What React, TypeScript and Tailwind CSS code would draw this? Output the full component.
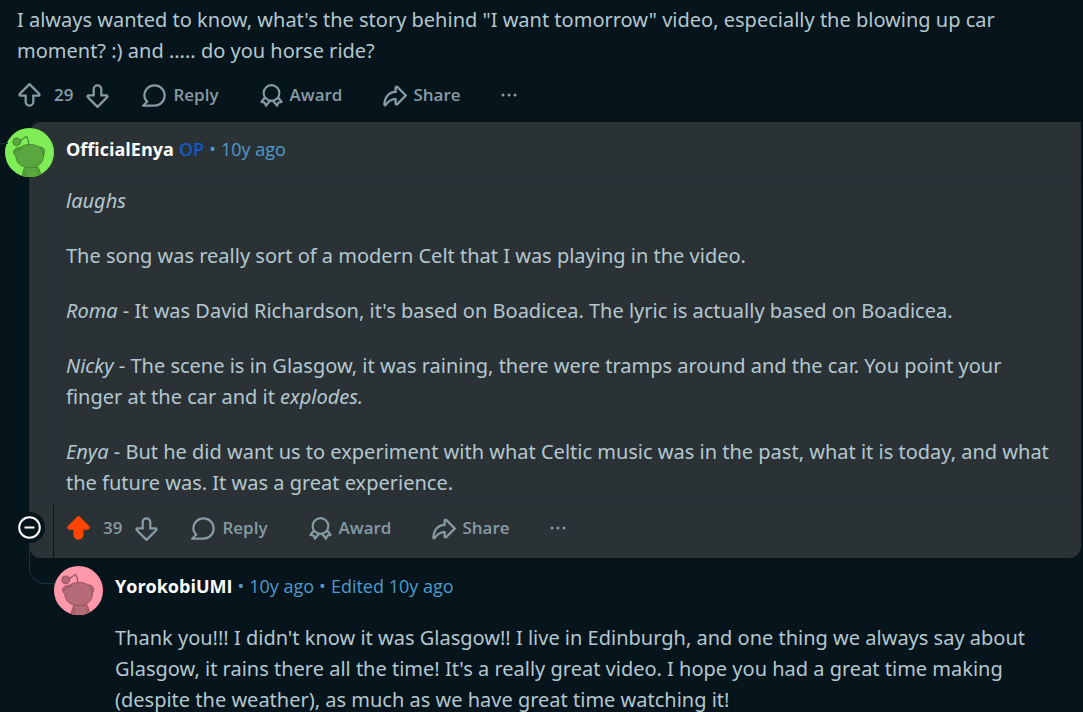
import type { ReactNode } from "react";

const ICON = "size-[25px] shrink-0";

const UP =
  "M10 19a3.966 3.966 0 01-3.96-3.962V10.98H2.838a1.731 1.731 0 01-1.605-1.073 1.734 1.734 0 01.377-1.895L9.364.254a.925.925 0 011.272 0l7.754 7.759c.498.499.646 1.242.376 1.894-.27.652-.9 1.073-1.605 1.073h-3.202v4.058A3.965 3.965 0 019.999 19H10z";
const UP_HOLE =
  "M2.989 9.179H7.84v5.731c0 1.13.81 2.163 1.934 2.278a2.163 2.163 0 002.386-2.15V9.179h4.851L10 2.163 2.989 9.179z";

function UpIcon({ filled }: { filled?: boolean }) {
  return (
    <svg viewBox="0 0 20 20" className={ICON} fill="currentColor" fillRule="evenodd" aria-hidden="true">
      <path d={filled ? UP : UP + UP_HOLE} />
    </svg>
  );
}

function DownIcon() {
  return (
    <svg viewBox="0 0 20 20" className={ICON} fill="currentColor" fillRule="evenodd" aria-hidden="true">
      <path d="M10 1a3.966 3.966 0 013.96 3.962V9.02h3.202c.706 0 1.335.42 1.605 1.073.27.652.122 1.396-.377 1.895l-7.754 7.759a.925.925 0 01-1.272 0l-7.754-7.76a1.734 1.734 0 01-.376-1.894c.27-.652.9-1.073 1.605-1.073h3.202V4.962A3.965 3.965 0 0110 1zm7.01 9.82h-4.85V5.09c0-1.13-.81-2.163-1.934-2.278a2.163 2.163 0 00-2.386 2.15v5.859H2.989l7.01 7.016 7.012-7.016z" />
    </svg>
  );
}

function ReplyIcon() {
  return (
    <svg viewBox="0 0 20 20" className={ICON} fill="currentColor" aria-hidden="true">
      <path d="M10 1a9 9 0 00-9 9c0 1.947.79 3.58 1.935 4.957L.231 17.661A.784.784 0 00.785 19H10a9 9 0 009-9 9 9 0 00-9-9zm0 16.2H6.162c-.994.004-1.907.053-3.045.144l-.076-.188a36.981 36.981 0 002.328-2.087l-1.05-1.263C3.297 12.576 2.8 11.331 2.8 10c0-3.97 3.23-7.2 7.2-7.2s7.2 3.23 7.2 7.2-3.23 7.2-7.2 7.2z" />
    </svg>
  );
}

function AwardIcon() {
  return (
    <svg viewBox="0 0 20 20" className={ICON} fill="none" stroke="currentColor" strokeWidth="1.7" strokeLinejoin="round" aria-hidden="true">
      <circle cx="10" cy="8" r="6.300" />
      <path d="M4.700 11.600L1.900 15.200l2.700.500.900 2.500 3.200-3.800M15.300 11.600l2.800 3.600-2.700.500-.900 2.500-3.200-3.800" />
    </svg>
  );
}

function ShareIcon() {
  return (
    <svg viewBox="0 0 20 20" className={ICON} fill="currentColor" aria-hidden="true">
      <path d="M12.8 17.524l6.89-6.887a.9.9 0 000-1.273L12.8 2.477a1.64 1.64 0 00-1.782-.349 1.64 1.64 0 00-1.014 1.518v2.593C4.054 6.728 1.192 12.075 1 17.376a1.353 1.353 0 00.862 1.32 1.35 1.35 0 001.531-.364l.334-.381c1.705-1.944 3.323-3.791 6.277-4.103v2.509c0 .667.398 1.262 1.014 1.518a1.638 1.638 0 001.783-.349v-.002zm-.994-1.548V12h-.9c-3.969 0-6.162 2.1-8.001 4.161.514-4.011 2.823-8.16 8-8.16h.9V4.024L17.784 10l-5.977 5.976z" />
    </svg>
  );
}

function Avatar({ tone }: { tone: "green" | "pink" }) {
  const [back, body, line] =
    tone === "green" ? ["#7eed56", "#5aa73f", "#43852f"] : ["#ff99aa", "#b56b77", "#8e4f5b"];
  return (
    <svg viewBox="0 0 49 49" className="size-[49px] shrink-0 rounded-full" aria-hidden="true">
      <rect width="49" height="49" fill={back} />
      <g fill={body} stroke={line} strokeWidth="0.9" strokeLinecap="round">
        <path d="M17 50c.300-4 1.300-8 3-11h13c1.800 3 2.800 7 3 11z" />
        <path d="M20.500 42.500c-.400 2.500-.500 5-.200 7.500M32.500 42c.800 2.500 1 5 .900 8" fill="none" />
        <path d="M8.600 23.500c.300-2.800 3-4.300 6.400-4 3-2.200 6.300-3 10-3 3.800 0 7 .900 9.700 2.600 3-.200 5 1.800 5 4.400 0 1.500-.500 2.700-1.200 3.600.200 8-5.500 12.600-13.500 12.600-8.200 0-14-4.300-14.200-11.700-1.500-1-2.400-2.700-2.200-4.500z" />
        <path d="M9.500 25c1.500-3 4.500-4.600 8.500-4.500M34.700 19.200c2 1.800 3.200 4.500 3.800 7.900" fill="none" />
        <path d="M15.500 12.500l6-4.200c1.500 2.500 2.300 5 2.500 8.200" fill="none" strokeWidth="1.200" />
        <circle cx="11.700" cy="13.800" r="3.900" />
      </g>
    </svg>
  );
}

function Action({ icon, label }: { icon: ReactNode; label: string }) {
  return (
    <button type="button" className="flex items-center gap-1.5">
      {icon}
      {label}
    </button>
  );
}

function Actions({ score, voted }: { score: number; voted?: boolean }) {
  return (
    <div className="flex items-center gap-8 font-['Open_Sans','Noto_Sans',sans-serif] text-[17px] leading-6 font-semibold text-[#869ba4]">
      <div className="flex items-center gap-3">
        <button type="button" aria-label="Upvote" aria-pressed={!!voted} className={voted ? "text-[#ff4500]" : ""}>
          <UpIcon filled={voted} />
        </button>
        <span>{score}</span>
        <button type="button" aria-label="Downvote">
          <DownIcon />
        </button>
      </div>
      <div className="flex items-center gap-10">
        <Action icon={<ReplyIcon />} label="Reply" />
        <Action icon={<AwardIcon />} label="Award" />
        <Action icon={<ShareIcon />} label="Share" />
        <button type="button" aria-label="More options">
          <svg viewBox="0 0 16 4" className="h-1 w-4" fill="currentColor" aria-hidden="true">
            <circle cx="2" cy="2" r="1.500" />
            <circle cx="8" cy="2" r="1.500" />
            <circle cx="14" cy="2" r="1.500" />
          </svg>
        </button>
      </div>
    </div>
  );
}

export default function App() {
  return (
    <main className="h-screen overflow-hidden bg-[#06141c] pt-1 font-['Noto_Sans','Open_Sans',sans-serif] text-xl leading-[31px] text-[#b4c7cf]">
      <article>
        <p className="pl-[17px]">
          I always wanted to know, what's the story behind "I want tomorrow" video, especially the blowing up car
          <br />
          moment? :) and ..... do you horse ride?
        </p>
        <div className="flex h-14 items-center pt-0.5 pl-[17px]">
          <Actions score={29} />
        </div>
      </article>

      <article className="relative mr-0.5 ml-[29px] rounded-tl-xl rounded-b-xl border-l border-[#232e34] bg-[#2a3236]">
        <span className="absolute top-[21px] -left-[30px] h-px w-2 bg-[#14303e]" />
        <header className="flex h-14 items-center border-b border-[#242d31] font-['Open_Sans','Noto_Sans',sans-serif] text-lg">
          <div className="-ml-[25px] pt-[5px]">
            <Avatar tone="green" />
          </div>
          <div className="flex items-center gap-[5px] pb-0.5 pl-3 text-[#4f9bcb]">
            <a href="#OfficialEnya" className="font-bold text-white">OfficialEnya</a>
            <span className="font-semibold text-[#1557c4]">OP</span>
            <span>•</span>
            <time>10y ago</time>
          </div>
        </header>
        <div className="ml-6 flex flex-col gap-6 border-l border-[#262f33] pt-[7px] pb-[5px] pl-[11px]">
          <p><em>laughs</em></p>
          <p>The song was really sort of a modern Celt that I was playing in the video.</p>
          <p><em>Roma</em> - It was David Richardson, it's based on Boadicea. The lyric is actually based on Boadicea.</p>
          <p>
            <em>Nicky</em> - The scene is in Glasgow, it was raining, there were tramps around and the car. You point your
            <br />
            finger at the car and it <em>explodes.</em>
          </p>
          <p>
            <em>Enya</em> - But he did want us to experiment with what Celtic music was in the past, what it is today, and what
            <br />
            the future was. It was a great experience.
          </p>
        </div>
        <footer className="flex h-[55px] border-t border-[#242d31]">
          <div className="flex w-6 items-center pb-2">
            <button type="button" aria-label="Collapse thread" className="-ml-4 shrink-0 rounded-full bg-[#06141c] p-1 text-white">
              <svg viewBox="0 0 23 23" className="size-[23px]" fill="none" stroke="currentColor" strokeWidth="2" aria-hidden="true">
                <circle cx="11.500" cy="11.500" r="10.300" />
                <path d="M6.500 11.500h10" />
              </svg>
            </button>
          </div>
          <div className="-ml-px flex items-center border-l border-[#06141c] pb-1.5 pl-3">
            <Actions score={39} voted />
          </div>
        </footer>
        <span className="absolute top-full -left-px -mt-3 h-[38px] w-[26px] rounded-bl-2xl border-b border-l border-[#15303e]" />
      </article>

      <article className="relative flex gap-3 pt-2 pl-[54px]">
        <Avatar tone="pink" />
        <div>
          <header className="flex h-10 items-center gap-[5px] font-['Open_Sans','Noto_Sans',sans-serif] text-lg text-[#4f9bcb]">
            <a href="#YorokobiUMI" className="font-bold text-white">YorokobiUMI</a>
            <span>•</span>
            <time>10y ago</time>
            <span>•</span>
            <span>Edited 10y ago</span>
          </header>
          <p className="pt-4">
            Thank you!!! I didn't know it was Glasgow!! I live in Edinburgh, and one thing we always say about
            <br />
            Glasgow, it rains there all the time! It's a really great video. I hope you had a great time making
            <br />
            (despite the weather), as much as we have great time watching it!
          </p>
        </div>
      </article>
    </main>
  );
}
